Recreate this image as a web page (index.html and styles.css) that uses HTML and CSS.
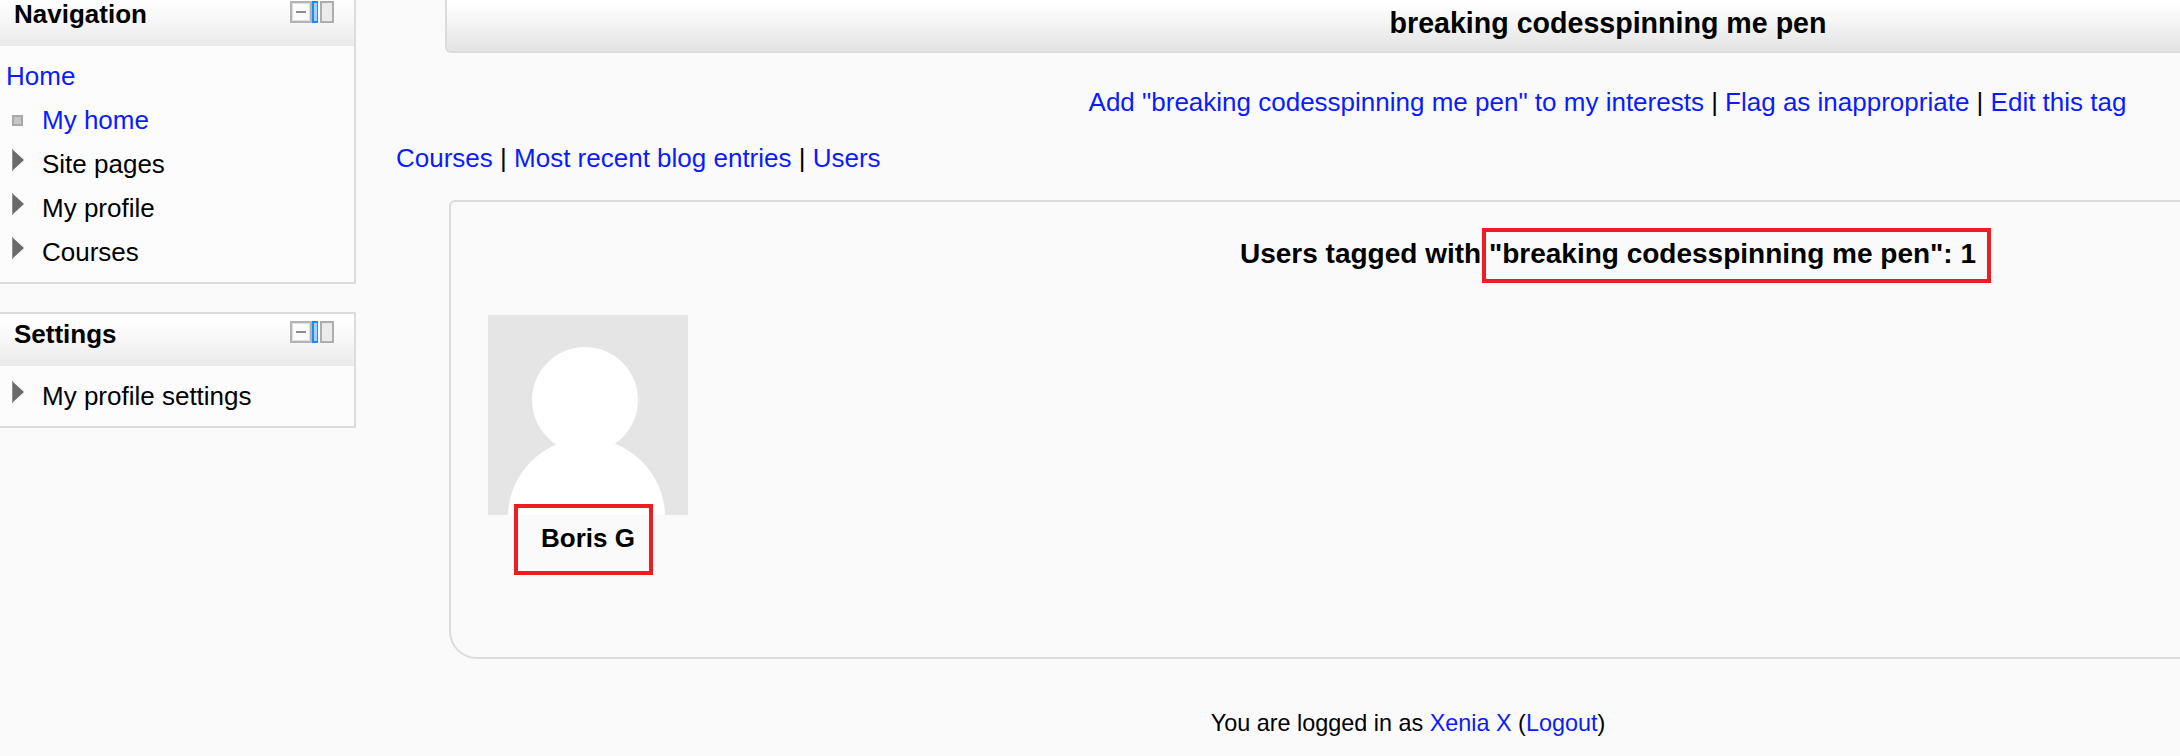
FILE: index.html
```html
<!DOCTYPE html>
<html lang="en">
<head>
<meta charset="utf-8">
<title>Tag page</title>
<link rel="stylesheet" href="styles.css">
</head>
<body>
<svg class="defs" width="0" height="0" aria-hidden="true">
  <symbol id="dock" viewBox="0 0 44 22">
    <rect x="1" y="1" width="20" height="20" fill="#fbfbfb" stroke="#b4b4b4" stroke-width="2"/>
    <path d="M2 2.5h18M2.5 2v18M19.5 2v18M2 19.500h18" stroke="#dedede" fill="none"/>
    <rect x="6" y="10" width="10" height="2" fill="#8c8c8c"/>
    <rect x="22" y="0" width="6" height="22" fill="#1b8afb"/>
    <rect x="24" y="2" width="3" height="18" fill="#9fd3ff"/>
    <rect x="31" y="1" width="12" height="20" fill="#ebebeb" stroke="#adadad" stroke-width="2"/>
  </symbol>
  <symbol id="arrow" viewBox="0 0 12 22">
    <path d="M0 0L12 11L0 22Z" fill="#6b6b6b"/>
    <path d="M.5 0V22" stroke="#8d8d8d"/>
  </symbol>
  <symbol id="bullet" viewBox="0 0 11 11">
    <rect x="1" y="1" width="9" height="9" fill="#c6c6c6" stroke="#a8a8a8" stroke-width="2"/>
  </symbol>
</svg>
<div class="page">
  <aside class="sidebar">
    <section class="block">
      <header class="block-head"><h2>Navigation</h2><svg class="dock"><use href="#dock"/></svg></header>
      <ul class="tree">
        <li class="root"><a>Home</a></li>
        <li><svg class="bullet"><use href="#bullet"/></svg><a>My home</a></li>
        <li><svg class="arrow"><use href="#arrow"/></svg>Site pages</li>
        <li><svg class="arrow"><use href="#arrow"/></svg>My profile</li>
        <li><svg class="arrow"><use href="#arrow"/></svg>Courses</li>
      </ul>
    </section>
    <section class="block">
      <header class="block-head"><h2>Settings</h2><svg class="dock"><use href="#dock"/></svg></header>
      <ul class="tree">
        <li><svg class="arrow"><use href="#arrow"/></svg>My profile settings</li>
      </ul>
    </section>
  </aside>
  <main class="content">
    <h1 class="title">breaking codesspinning me pen</h1>
    <p class="actions"><a>Add "breaking codesspinning me pen" to my interests</a> | <a>Flag as inappropriate</a> | <a>Edit this tag</a></p>
    <p class="tabs"><a>Courses</a> | <a>Most recent blog entries</a> | <a>Users</a></p>
    <section class="userbox">
      <h3>Users tagged with <span class="marked">"breaking codesspinning me pen": 1<i class="mark mark-tag"></i></span></h3>
      <div class="user">
        <svg class="avatar" viewBox="0 0 200 200">
          <rect width="200" height="200" fill="#e5e5e5"/>
          <circle cx="97" cy="85" r="53" fill="#fff"/>
          <circle cx="98.500" cy="202" r="78.500" fill="#fff"/>
        </svg>
        <strong class="marked">Boris G<i class="mark mark-user"></i></strong>
      </div>
    </section>
    <footer class="login">You are logged in as <a>Xenia X</a> (<a>Logout</a>)</footer>
  </main>
</div>
</body>
</html>
```
FILE: styles.css
```css
* { box-sizing: border-box; }
body {
  margin: 0;
  height: 756px;
  overflow: hidden;
  background: #fafafa;
  color: #000;
  font: 26px/44px "Liberation Sans", Arial, sans-serif;
}
h1, h2, h3, p, ul { margin: 0; padding: 0; }
a { color: #0a1cff; }
.defs { display: block; height: 0; }
.page { display: flex; height: 756px; overflow: hidden; }

.sidebar {
  flex: none;
  width: 356px;
  margin-top: -8px;
  display: flex;
  flex-direction: column;
  gap: 28px;
}
.block {
  border: 2px solid #dcdcdc;
  border-left: 0;
  background: #fcfcfc;
}
.block-head {
  height: 52px;
  padding: 0 20px 0 14px;
  display: flex;
  justify-content: space-between;
  background: linear-gradient(#fff 10%, #f6f6f6 55%, #e9e9e9);
}
.block-head h2 { font-size: 26px; line-height: 40px; }
.dock { width: 44px; height: 22px; margin-top: 7px; }
.tree { list-style: none; padding: 8px 0; }
.tree li { display: flex; height: 44px; padding-left: 12px; }
.tree .root { padding-left: 6px; }
.arrow { width: 12px; height: 22px; margin: 7px 18px 0 0; }
.bullet { width: 11px; height: 11px; margin: 17px 19px 0 0; }

.content { flex: none; width: 2460px; }
.title {
  width: 2326px;
  height: 53px;
  margin-left: 89px;
  border: 2px solid #dcdcdc;
  border-top: 0;
  border-radius: 0 0 6px 6px;
  background: linear-gradient(#fff 8%, #f4f4f4 45%, #e5e5e5 95%);
  font-size: 28.6px;
  line-height: 47px;
  text-align: center;
}
.actions { width: 2325px; margin: 27px 0 0 89px; text-align: center; }
.tabs { margin: 12px 0 0 40px; }
.userbox {
  width: 2318px;
  height: 459px;
  margin: 20px 0 0 93px;
  padding: 30px 37px 0;
  border: 2px solid #dcdcdc;
  border-radius: 6px 6px 28px 28px;
}
.userbox h3 { font-size: 28px; line-height: 44px; text-align: center; }
.user {
  width: 200px;
  margin-top: 39px;
  display: flex;
  flex-direction: column;
  align-items: center;
}
.avatar { width: 200px; height: 200px; }
.user strong { line-height: 46px; }
.marked { position: relative; }
.mark { position: absolute; border: 4px solid #ee1c23; }
.mark-tag { left: -7px; top: -10px; width: 509px; height: 55px; }
.mark-user { left: -27px; top: -11px; width: 139px; height: 71px; }
.login { margin: 44px 0 0 0; width: 2104px; text-align: center; font-size: 23.4px; line-height: 40px; }
```
